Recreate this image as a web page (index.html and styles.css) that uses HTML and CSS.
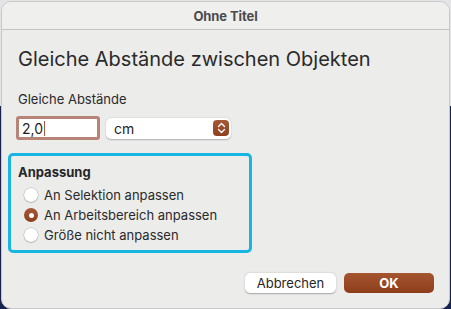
FILE: index.html
```html
<!DOCTYPE html>
<html lang="de">
<head>
<meta charset="utf-8">
<link rel="stylesheet" href="styles.css">
</head>
<body>
<div class="desk">
  <div class="window">
    <div class="titlebar">Ohne Titel</div>
    <div class="content">
      <h1 class="heading">Gleiche Abstände zwischen Objekten</h1>
      <div class="label">Gleiche Abstände</div>
      <div class="fields">
        <div class="input"><span class="val">2,0</span><span class="caret"></span></div>
        <div class="select">
          <span class="sel-text">cm</span>
          <span class="stepper">
            <svg width="9" height="12" viewBox="0 0 9 12"><path d="M1.5 4.5 L4.5 1.5 L7.5 4.5 M1.5 7.5 L4.5 10.5 L7.5 7.5" fill="none" stroke="#fff" stroke-width="1.4" stroke-linecap="round" stroke-linejoin="round"/></svg>
          </span>
        </div>
      </div>
      <div class="group">
        <div class="group-title">Anpassung</div>
        <div class="radio-row"><span class="radio"></span><span>An Selektion anpassen</span></div>
        <div class="radio-row"><span class="radio on"></span><span>An Arbeitsbereich anpassen</span></div>
        <div class="radio-row"><span class="radio"></span><span>Größe nicht anpassen</span></div>
      </div>
      <div class="buttons">
        <div class="btn">Abbrechen</div>
        <div class="btn primary">OK</div>
      </div>
    </div>
  </div>
</div>
</body>
</html>
```

FILE: styles.css
```css
* { box-sizing: border-box; }
html, body { margin: 0; padding: 0; }
body {
  width: 451px;
  height: 309px;
  overflow: hidden;
  background: linear-gradient(to bottom, #e4e4e6 0, #e4e4e6 106px, #17224e 106px, #17224e 100%);
  font-family: "Inter", "Liberation Sans", sans-serif;
  color: #262626;
}
.desk {
  padding: 1px 1px 0 1px;
}
.window {
  height: 308px;
  background: #ececeb;
  border-radius: 10px;
  border: 1px solid #c9c9c9;
  overflow: hidden;
  display: flex;
  flex-direction: column;
}
.titlebar {
  height: 28px;
  flex: none;
  background: #efefee;
  border-bottom: 1px solid #c4c4c4;
  text-align: center;
  font-weight: 700;
  font-size: 13px;
  line-height: 28px;
  color: #4b4b4b;
  letter-spacing: -0.1px;
}
.content {
  padding: 0 15px 0 7px;
  display: flex;
  flex-direction: column;
  flex: 1;
}
.heading {
  margin: 16px 0 0 9px;
  font-size: 20px;
  font-weight: 400;
  line-height: 26px;
  color: #2a2a2a;
  letter-spacing: 0;
}
.label {
  margin: 19px 0 0 9px;
  font-size: 13px;
  line-height: 16px;
  color: #2a2a2a;
}
.fields {
  margin: 9px 0 0 7px;
  display: flex;
  align-items: center;
  gap: 6px;
}
.input {
  width: 84px;
  height: 24px;
  border: 3px solid #b98478;
  border-radius: 3px;
  background: #fff;
  display: flex;
  align-items: center;
  padding-left: 3px;
  font-size: 14px;
  color: #1f1f1f;
}
.caret {
  width: 1px;
  height: 15px;
  background: #a85a40;
  margin-left: 1px;
}
.select {
  width: 125px;
  height: 21px;
  background: #fff;
  border-radius: 5px;
  box-shadow: 0 0.5px 1.5px rgba(0,0,0,0.25);
  display: flex;
  align-items: center;
  justify-content: space-between;
  padding: 0 2px 0 8px;
  font-size: 14px;
  color: #1f1f1f;
}
.stepper {
  width: 16px;
  height: 16px;
  border-radius: 4px;
  background: linear-gradient(#a65734, #8e3f1f);
  display: flex;
  align-items: center;
  justify-content: center;
}
.group {
  margin: 13px 0 0 -1px;
  width: 244px;
  height: 100px;
  border: 3px solid #18b6e2;
  border-radius: 5px;
  padding: 8px 0 0 7px;
}
.group-title {
  font-weight: 700;
  font-size: 13px;
  line-height: 17px;
  color: #262626;
  margin-bottom: 4px;
}
.radio-row {
  display: flex;
  align-items: center;
  gap: 6px;
  height: 20px;
  font-size: 13px;
  color: #2a2a2a;
  padding-left: 6px;
}
.radio {
  width: 14px;
  height: 14px;
  border-radius: 50%;
  background: #fff;
  box-shadow: 0 0 0 0.5px rgba(0,0,0,0.22), 0 1px 1px rgba(0,0,0,0.15);
  display: flex;
  align-items: center;
  justify-content: center;
}
.radio.on {
  background: linear-gradient(#a65734, #8e3f1f);
  box-shadow: none;
}
.radio.on::after {
  content: "";
  width: 5px;
  height: 5px;
  border-radius: 50%;
  background: #fff;
}
.buttons {
  margin-top: 20px;
  display: flex;
  justify-content: flex-end;
  gap: 8px;
}
.btn {
  width: 91px;
  height: 20px;
  border-radius: 5px;
  background: #fff;
  box-shadow: 0 0.5px 1.5px rgba(0,0,0,0.3);
  font-size: 13px;
  line-height: 20px;
  text-align: center;
  color: #262626;
}
.btn.primary {
  width: 90px;
  background: linear-gradient(#a4562f, #8e3d1b);
  color: #fff;
  font-weight: 700;
  box-shadow: none;
}
```
